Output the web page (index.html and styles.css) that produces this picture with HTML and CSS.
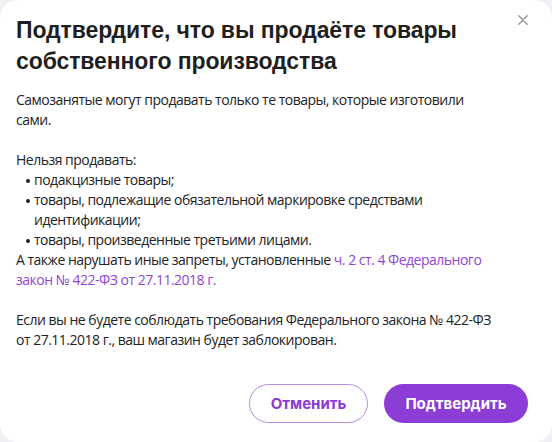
FILE: index.html
```html
<!DOCTYPE html>
<html lang="ru">
<head>
<meta charset="utf-8">
<link rel="stylesheet" href="styles.css">
</head>
<body>
<div class="modal">
  <button class="close" aria-label="Закрыть">
    <svg width="10" height="10" viewBox="0 0 10 10"><path d="M0.8 0.8L9.2 9.2M9.2 0.8L0.8 9.2" stroke="#9a9ca3" stroke-width="1.5" stroke-linecap="round"/></svg>
  </button>
  <h1 class="title">Подтвердите, что вы продаёте товары собственного производства</h1>
  <div class="content">
    <p>Самозанятые могут продавать только те товары, которые изготовили сами.</p>
    <p class="gap">Нельзя продавать:</p>
    <ul class="list">
      <li>подакцизные товары;</li>
      <li>товары, подлежащие обязательной маркировке средствами идентификации;</li>
      <li>товары, произведенные третьими лицами.</li>
    </ul>
    <p>А также нарушать иные запреты, установленные <a class="link" href="#">ч. 2 ст. 4 Федерального закон № 422-ФЗ от 27.11.2018 г.</a></p>
    <p class="gap">Если вы не будете соблюдать требования Федерального закона № 422-ФЗ от 27.11.2018 г., ваш магазин будет заблокирован.</p>
  </div>
  <div class="actions">
    <button class="btn btn-outline">Отменить</button>
    <button class="btn btn-primary">Подтвердить</button>
  </div>
</div>
</body>
</html>
```
FILE: styles.css
```css
html, body {
  margin: 0;
  padding: 0;
  background: #eef0f3;
}
.modal {
  position: relative;
  box-sizing: border-box;
  width: 552px;
  height: 442px;
  background: #fff;
  border-radius: 18px;
  padding: 15px 24px 19px 16px;
  display: flex;
  flex-direction: column;
}
.close {
  position: absolute;
  top: 15px;
  right: 24px;
  width: 10px;
  height: 10px;
  padding: 0;
  border: 0;
  background: none;
  display: flex;
}
.title {
  margin: 0;
  font-family: "Liberation Sans", Arial, sans-serif;
  font-weight: 700;
  font-size: 23px;
  line-height: 31px;
  color: #1f1f22;
  letter-spacing: -0.1px;
}
.content {
  margin-top: 13px;
  max-width: 482px;
  font-family: "Open Sans", "Noto Sans", sans-serif;
  font-size: 14px;
  letter-spacing: -0.5px;
  line-height: 20px;
  color: #222326;
}
.content p {
  margin: 0;
}
.content p.gap {
  margin-top: 20px;
}
.list {
  margin: 0;
  padding-left: 18px;
  list-style: none;
}
.list li {
  position: relative;
}
.list li::before {
  content: "";
  position: absolute;
  left: -8px;
  top: 9px;
  width: 4px;
  height: 4px;
  border-radius: 50%;
  background: #222326;
}
.link {
  color: #9046d4;
  text-decoration: none;
}
.actions {
  margin-top: auto;
  display: flex;
  justify-content: flex-end;
  gap: 16px;
}
.btn {
  height: 39px;
  border-radius: 20px;
  font-family: "Inter", sans-serif;
  font-weight: 700;
  font-size: 15px;
  box-sizing: border-box;
  cursor: pointer;
}
.btn-outline {
  width: 119px;
  background: #fff;
  border: 1.5px solid #b58ae3;
  color: #8a3ad6;
}
.btn-primary {
  width: 144px;
  background: #8b3dd6;
  border: 0;
  color: #fff;
}
```
